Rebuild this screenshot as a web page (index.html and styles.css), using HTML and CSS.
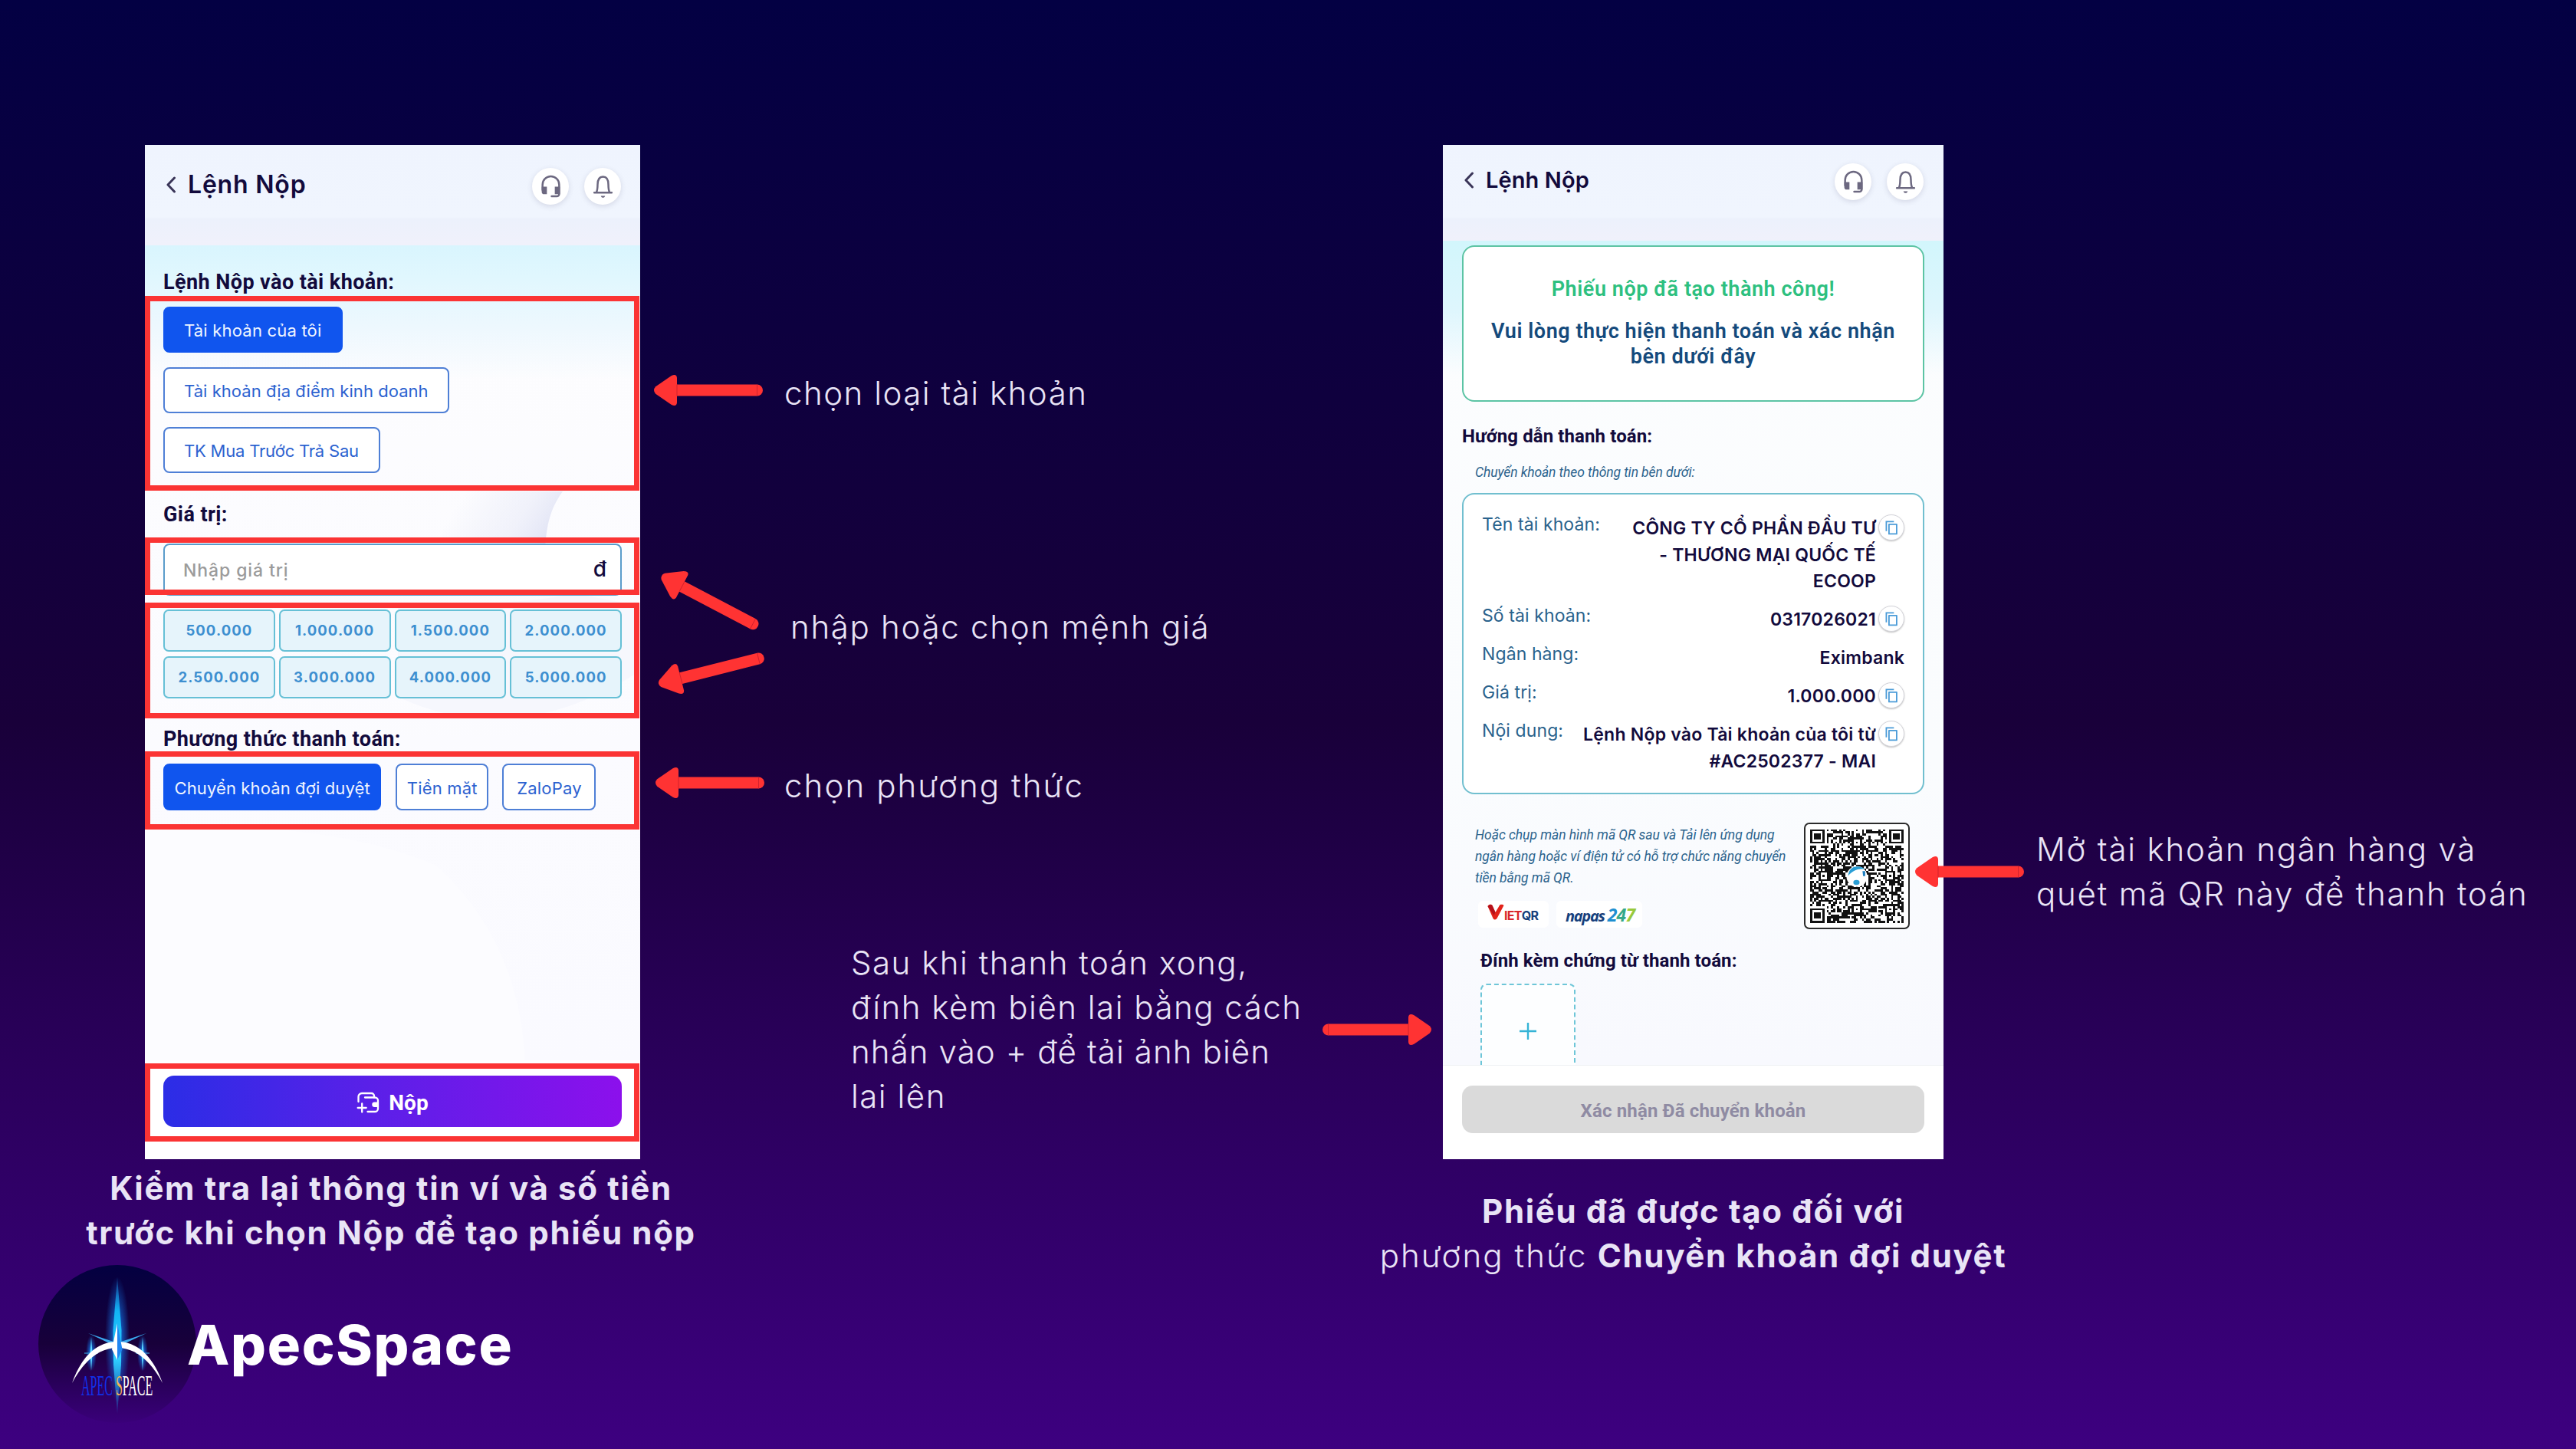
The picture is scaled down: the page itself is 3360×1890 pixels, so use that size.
FILE: index.html
```html
<!DOCTYPE html>
<html lang="vi">
<head>
<meta charset="utf-8">
<title>ApecSpace – Lệnh Nộp</title>
<link rel="stylesheet" href="styles.css">
</head>
<body>
<svg class="defs" aria-hidden="true">
  <symbol id="i-back" viewBox="0 0 14 22"><path d="M11.5 2 3 11l8.5 9" fill="none" stroke="#3a3558" stroke-width="3" stroke-linecap="round" stroke-linejoin="round"/></symbol>
  <symbol id="i-headset" viewBox="0 0 26 30"><path d="M2.5 19v-6.500a10.500 10.500 0 0 1 21 0V24a3 3 0 0 1-3 3.200H14" fill="none" stroke="#6c6880" stroke-width="2.400" stroke-linecap="round"/><path d="M1.500 15h6.500v9.500H4.500a3 3 0 0 1-3-3zM18 15h6.500v9.500H18z" fill="#6c6880"/></symbol>
  <symbol id="i-bell" viewBox="0 0 26 30"><path d="M2 22.500h22M4.500 22.500c1.500-3 1.700-6 1.700-10C6.200 6 8.800 2.500 13 2.500s6.800 3.500 6.800 10c0 4 .2 7 1.700 10" fill="none" stroke="#6c6880" stroke-width="2.400" stroke-linecap="round" stroke-linejoin="round"/><path d="M10.300 26.500h5.400c-.4 1.600-1.400 2.400-2.700 2.400s-2.300-.8-2.700-2.400z" fill="#6c6880"/></symbol>
  <symbol id="i-copy" viewBox="0 0 18 20"><path d="M1.500 14.500v-13H12" fill="none" stroke="#4a9bd8" stroke-width="1.900"/><path d="M5.200 5.200h10.600v13.200H5.200z" fill="none" stroke="#4a9bd8" stroke-width="1.900" stroke-linejoin="round"/></symbol>
  <symbol id="i-deposit" viewBox="0 0 30 28"><g fill="none" stroke="#fff" stroke-width="2.300" stroke-linecap="round" stroke-linejoin="round"><path d="M2.500 13V6.500a4.500 4.500 0 0 1 4.500-4.500h12.500a3.500 3.500 0 0 1 3.500 3.500V7.500"/><path d="M11 7.500h13a4 4 0 0 1 4 4V22a4 4 0 0 1-4 4h-9.500"/><path d="M7.200 15.500v11M1.700 21h11"/></g><path d="M28 13.500h-4.500a3 3 0 0 0 0 6.500H28z" fill="#fff"/></symbol>
  <symbol id="a-left" viewBox="0 0 142 50"><path d="M28 17.500h106.500a7.500 7.500 0 0 1 0 15H28z"/><path d="M2.200 20.300 22.500 6.300Q29.500 2.800 30 9V41q-.5 6.200-7.500 2.700L2.200 29.700Q-2.200 25 2.200 20.300z"/><path d="M30 17.500v15M134.500 17.500v15" fill="none" stroke="#c81f2c" stroke-width=".8"/></symbol>
</svg>

<main class="slide">
  <section class="panel">
    <div class="phone phone-order">
      <svg class="swoosh" viewBox="0 0 646 1323" aria-hidden="true">
        <defs>
          <linearGradient id="fold" gradientUnits="userSpaceOnUse" x1="420" y1="450" x2="528" y2="520"><stop offset="0" stop-color="#e6e9f7" stop-opacity="0"/><stop offset=".6" stop-color="#e9ebf8" stop-opacity=".6"/><stop offset="1" stop-color="#dfe2f4"/></linearGradient>
        </defs>
        <path d="M545 452C528 475 522 500 522 540L380 540 400 452z" fill="url(#fold)"/>
        <path d="M330 600Q500 600 560 585L640 600 640 690Q480 790 330 720z" fill="#f6f7fd"/>
        <path d="M0 890Q240 880 380 940 490 1040 496 1200H0z" fill="#fcfcff"/>
      </svg>
      <header class="topbar">
        <svg class="back"><use href="#i-back"/></svg>
        <h1 class="title">Lệnh Nộp</h1>
        <span class="round"><svg><use href="#i-headset"/></svg></span>
        <span class="round"><svg><use href="#i-bell"/></svg></span>
      </header>
      <div class="content">
        <h2 class="heading">Lệnh Nộp vào tài khoản:</h2>
        <div class="accounts">
          <button class="option active">Tài khoản của tôi</button>
          <button class="option">Tài khoản địa điểm kinh doanh</button>
          <button class="option later">TK Mua Trước Trả Sau</button>
        </div>
        <h2 class="heading value-heading">Giá trị:</h2>
        <div class="field"><span class="placeholder">Nhập giá trị</span><span class="unit">đ</span></div>
        <div class="amounts">
          <button>500.000</button><button>1.000.000</button><button>1.500.000</button><button>2.000.000</button>
          <button>2.500.000</button><button>3.000.000</button><button>4.000.000</button><button>5.000.000</button>
        </div>
        <h2 class="heading method-heading">Phương thức thanh toán:</h2>
        <div class="methods">
          <button class="option active">Chuyển khoản đợi duyệt</button>
          <button class="option">Tiền mặt</button>
          <button class="option">ZaloPay</button>
        </div>
      </div>
      <footer class="actions">
        <button class="submit"><svg><use href="#i-deposit"/></svg>Nộp</button>
      </footer>
      <i class="mark mark-accounts"></i>
      <i class="mark mark-field"></i>
      <i class="mark mark-amounts"></i>
      <i class="mark mark-methods"></i>
      <i class="mark mark-submit"></i>
    </div>
    <p class="caption"><b>Kiểm tra lại thông tin ví và số tiền<br>trước khi chọn Nộp để tạo phiếu nộp</b></p>
    <div class="brand">
      <svg class="emblem" viewBox="0 0 206 206">
        <defs>
          <linearGradient id="sky" x1="0" y1="0" x2="0" y2="1"><stop offset="0" stop-color="#030041"/><stop offset=".5" stop-color="#18003a"/><stop offset="1" stop-color="#3a007a"/></linearGradient>
          <linearGradient id="beam" x1="0" y1="0" x2="0" y2="1"><stop offset="0" stop-color="#1a7fd8" stop-opacity=".3"/><stop offset=".25" stop-color="#12b4f5"/><stop offset=".6" stop-color="#2fd0ff"/><stop offset="1" stop-color="#1a7fd8" stop-opacity=".2"/></linearGradient>
          <radialGradient id="halo"><stop offset="0" stop-color="#1597ff"/><stop offset=".5" stop-color="#1173e6" stop-opacity=".55"/><stop offset="1" stop-color="#1173e6" stop-opacity="0"/></radialGradient>
        </defs>
        <circle cx="103" cy="103" r="103" fill="url(#sky)"/>
        <ellipse cx="103" cy="97" rx="16" ry="82" fill="url(#halo)"/>
        <ellipse cx="69" cy="115" rx="7" ry="24" fill="url(#halo)"/>
        <ellipse cx="136" cy="115" rx="7" ry="24" fill="url(#halo)"/>
        <path d="M103 16 108.500 85 108 130 103 194 98 130 97.500 85z" fill="url(#beam)"/>
        <path d="M69 94 70.500 115 69 138 67.500 115zM136 94 137.500 115 136 138 134.500 115z" fill="#5fd6ff"/>
        <path d="M60 115h18M127 115h18" stroke="#39b7f5" stroke-width="1"/>
        <path d="M65 89 101 101 99 105zM141 89 105 101 107 105z" fill="#3aa8ee"/>
        <path d="M44 154C56 120 76 100 103 100s47 20 59 54C146 124 126 108 103 108S60 124 44 154z" fill="#fff"/>
        <path d="M103 76 96 110 103 124z" fill="#fff"/>
        <path d="M103 76 109.500 110 103 124z" fill="#1f86f2"/>
        <text class="emblem-text" transform="translate(56 170) scale(.42 1)"><tspan fill="#1030e8">APEC</tspan><tspan dx="10" fill="#f5b553">S</tspan><tspan fill="#fff">PACE</tspan></text>
      </svg>
      <strong class="brand-name">ApecSpace</strong>
    </div>
  </section>

  <section class="notes">
    <div class="note note-account"><svg class="arrow"><use href="#a-left"/></svg><p>chọn loại tài khoản</p></div>
    <div class="note note-amount">
      <svg class="arrow-pair" viewBox="0 0 150 180"><use href="#a-left" width="142" height="50" transform="translate(10 21) rotate(27.800) translate(0 -25)"/><use href="#a-left" width="142" height="50" transform="translate(6 162) rotate(-14.200) translate(0 -25)"/></svg>
      <p>nhập hoặc chọn mệnh giá</p>
    </div>
    <div class="note note-method"><svg class="arrow"><use href="#a-left"/></svg><p>chọn phương thức</p></div>
    <div class="note note-receipt"><p>Sau khi thanh toán xong,<br>đính kèm biên lai bằng cách<br><span>nhấn vào + để tải ảnh biên</span><br>lai lên</p><svg class="arrow flipped"><use href="#a-left"/></svg></div>
  </section>

  <section class="panel">
    <div class="phone phone-result">
      <header class="topbar">
        <svg class="back"><use href="#i-back"/></svg>
        <h1 class="title">Lệnh Nộp</h1>
        <span class="round"><svg><use href="#i-headset"/></svg></span>
        <span class="round"><svg><use href="#i-bell"/></svg></span>
      </header>
      <div class="content">
        <div class="success">
          <p class="success-title">Phiếu nộp đã tạo thành công!</p>
          <p class="success-text">Vui lòng thực hiện thanh toán và xác nhận<br>bên dưới đây</p>
        </div>
        <h2 class="heading">Hướng dẫn thanh toán:</h2>
        <p class="hint">Chuyển khoản theo thông tin bên dưới:</p>
        <dl class="transfer">
          <div><dt>Tên tài khoản:</dt><dd>CÔNG TY CỔ PHẦN ĐẦU TƯ<br>- THƯƠNG MẠI QUỐC TẾ<br>ECOOP</dd><span class="copy"><svg><use href="#i-copy"/></svg></span></div>
          <div><dt>Số tài khoản:</dt><dd>0317026021</dd><span class="copy"><svg><use href="#i-copy"/></svg></span></div>
          <div><dt>Ngân hàng:</dt><dd>Eximbank</dd></div>
          <div><dt>Giá trị:</dt><dd>1.000.000</dd><span class="copy"><svg><use href="#i-copy"/></svg></span></div>
          <div><dt>Nội dung:</dt><dd>Lệnh Nộp vào Tài khoản của tôi từ<br>#AC2502377 - MAI</dd><span class="copy"><svg><use href="#i-copy"/></svg></span></div>
        </dl>
        <div class="qr-row">
          <div class="qr-info">
            <p class="hint">Hoặc chụp màn hình mã QR sau và Tải lên ứng dụng<br>ngân hàng hoặc ví điện tử có hỗ trợ chức năng chuyển<br>tiền bằng mã QR.</p>
            <div class="networks">
              <span class="vietqr"><svg viewBox="0 0 21 21"><path d="M0 3Q3-1 6 2l4 9L16 1q4-1 5 1L12 19q-3 3-5 0z" fill="#e2231a"/><path d="M0 3Q3-1 6 2l4 9-2 4z" fill="#b5121b"/></svg><em>IET</em>QR</span>
              <span class="napas">napas <em>2</em><em>4</em><em>7</em></span>
            </div>
          </div>
          <div class="qr-frame"><svg id="qr" viewBox="0 0 45 45" shape-rendering="crispEdges"></svg></div>
        </div>
        <h2 class="heading attach-heading">Đính kèm chứng từ thanh toán:</h2>
        <div class="upload"><svg viewBox="0 0 22 22"><path d="M11 0v22M0 11h22" stroke="#35b3d6" stroke-width="2.400"/></svg></div>
      </div>
      <footer class="actions"><button class="submit">Xác nhận Đã chuyển khoản</button></footer>
    </div>
    <p class="caption"><b>Phiếu đã được tạo đối với</b><br><span>phương thức</span> <b>Chuyển khoản đợi duyệt</b></p>
  </section>

  <section class="notes notes-qr">
    <div class="note note-qr"><svg class="arrow"><use href="#a-left"/></svg><p>Mở tài khoản ngân hàng và<br>quét mã QR này để thanh toán</p></div>
  </section>
</main>
<script src="qr.js"></script>
</body>
</html>
```
FILE: styles.css
```css
* { box-sizing: border-box; margin: 0; padding: 0; }

body {
  width: 3360px;
  height: 1890px;
  overflow: hidden;
  font-family: "Inter", "Liberation Sans", sans-serif;
  background: linear-gradient(180deg, #030043 0%, #19003a 50%, #3d0080 100%);
}

.defs { display: none; }
button { font: inherit; border: 0; background: none; }
svg { display: block; flex: none; }

.slide {
  display: grid;
  grid-template-columns: 853px 929px 853px 1fr;
  height: 1890px;
}
.panel { padding-top: 189px; }

/* phones */
.phone {
  position: relative;
  display: flex;
  flex-direction: column;
  height: 1323px;
  overflow: hidden;
  color: #120a3c;
}
.phone-order { width: 646px; margin-left: 189px; background: linear-gradient(180deg, #fdfdfe 0, #fafaff 1200px); }
.phone-result {
  width: 653px;
  margin-left: 100px;
  background: linear-gradient(180deg, #fcfdfe 0, #fafcfe 800px, #f8f9fe 1200px);
}
.swoosh { position: absolute; left: 0; top: 0; width: 646px; height: 1323px; }
.topbar {
  position: relative;
  display: flex;
  align-items: flex-start;
  height: 131px;
  padding: 30px 25px 0 27px;
  background: linear-gradient(180deg, #eff4fe 0, #f0f5fe 94px, #ecf1fc 96px, #f0f1fb 100%);
}
.phone-result .topbar { height: 125px; padding: 24px 26px 0 27px; }
.back { width: 14px; height: 22px; margin: 11px 15px 0 0; }
.title {
  margin-right: auto;
  font-size: 32px;
  font-weight: 600;
  line-height: 44px;
  letter-spacing: .8px;
}
.phone-result .title { font-size: 29px; line-height: 43px; letter-spacing: .1px; }
.round {
  display: grid;
  place-items: center;
  width: 48px;
  height: 48px;
  margin-left: 20px;
  border-radius: 50%;
  background: #fff;
  box-shadow: 0 2px 7px rgba(60, 60, 100, .16);
}
.round svg { width: 27px; height: 31px; }

.content { position: relative; flex: 1; min-height: 0; overflow: hidden; padding: 32px 24px 0; background: linear-gradient(180deg, #d9f5fe 0, #e0f7fe 40px, #eef8fe 110px, rgba(252, 253, 254, 0) 175px); }
.phone-result .content { padding: 6px 25px 0; background: linear-gradient(180deg, #d2f6fc 0, #def6fd 90px, rgba(252, 253, 254, 0) 175px); }
.heading {
  font-family: "Roboto", sans-serif;
  font-size: 27px;
  font-weight: 700;
  line-height: 32px;
  letter-spacing: .42px;
}
.accounts { display: flex; flex-direction: column; align-items: flex-start; gap: 18.5px; margin-top: 16px; }
.option {
  height: 60px;
  padding: 2px 25px 0;
  border: 2px solid #4e7fd6;
  border-radius: 8px;
  background: #fff;
  color: #2c62d0;
  font-size: 22px;
  line-height: 55px;
  letter-spacing: .05px;
  white-space: nowrap;
}
.option.active { border-color: #1055ee; background: #1055ee; color: #eef4ff; letter-spacing: .2px; }
.option.later { letter-spacing: -.2px; padding-right: 26px; }
.value-heading { margin-top: 38px; }
.field {
  display: flex;
  justify-content: space-between;
  height: 68px;
  margin-top: 22px;
  padding: 0 18px 0 24px;
  border: 2px solid #5a9ccb;
  border-radius: 8px;
  background: #fff;
  line-height: 67px;
}
.placeholder { font-size: 23px; font-weight: 500; letter-spacing: .9px; color: #9b9b9b; }
.unit { font-size: 28px; font-weight: 500; line-height: 63px; }
.amounts { display: grid; grid-template-columns: repeat(4, 1fr); gap: 6px 5px; margin-top: 18px; }
.amounts button {
  height: 55px;
  padding-bottom: 1px;
  border: 2px solid #66c0d6;
  border-radius: 7px;
  background: #e6f4fb;
  color: #3d8fd0;
  font-size: 18.500px;
  font-weight: 700;
  line-height: 49px;
  letter-spacing: 1.100px;
}
.method-heading { margin-top: 37px; }
.methods { display: flex; gap: 18.5px; margin-top: 16px; }
.methods .option { height: 61px; padding: 3px 12.500px 0 12.500px; letter-spacing: .12px; }
.methods .option + .option { padding: 3px 12px 0 13px; letter-spacing: .2px; }
.methods .option + .option + .option { padding: 3px 16px 0 17px; }

.actions { position: relative; height: 129px; padding: 20px 24px 0; background: #fff; }
.submit {
  display: flex;
  align-items: center;
  justify-content: center;
  gap: 12px;
  width: 598px;
  height: 67px;
  padding-top: 3px;
  border-radius: 14px;
  background: linear-gradient(90deg, #2b2de6 0, #5a20e8 45%, #8c10ec 100%);
  color: #fff;
  font-family: "Roboto", sans-serif;
  font-size: 28px;
  font-weight: 700;
}
.submit svg { width: 30px; height: 28px; }
.phone-result .actions { height: 123px; padding: 26px 25px 0; border-top: 1px solid #eef1f4; }
.phone-result .submit { width: 603px; height: 62px; background: #dadada; color: #8f8ba3; font-size: 24px; letter-spacing: .15px; }

/* red frames over the form */
.mark { position: absolute; left: 0; width: 645px; border: 7px solid #fb3434; }
.mark-accounts { top: 197px; height: 254px; }
.mark-field { top: 512px; height: 75px; }
.mark-amounts { top: 597px; height: 151px; }
.mark-methods { top: 791px; height: 102px; }
.mark-submit { top: 1198px; height: 102px; }

/* result screen */
.success {
  height: 204px;
  padding-top: 39px;
  border: 2px solid #5cc4a4;
  border-radius: 16px;
  background: #fff;
  font-family: "Roboto", sans-serif;
  font-size: 27px;
  font-weight: 600;
  line-height: 33px;
  letter-spacing: .55px;
  text-align: center;
}
.success-title { color: #2dc07f; }
.success-text { margin-top: 22px; color: #144a7c; }
.phone-result .heading { margin-top: 31px; font-size: 24px; line-height: 28px; letter-spacing: .1px; }
.hint {
  margin: 22px 0 0 17px;
  font-family: "Roboto", sans-serif;
  font-size: 17.500px;
  font-style: italic;
  line-height: 22px;
  letter-spacing: -.1px;
  color: #2b638d;
  white-space: nowrap;
}
.transfer {
  display: flex;
  flex-direction: column;
  gap: 15.500px;
  height: 393px;
  margin-top: 16px;
  padding: 27px 24px 0 24px;
  border: 2px solid #71bfcf;
  border-radius: 16px;
  background: #fff;
  font-size: 23px;
}
.transfer div { display: flex; align-items: flex-start; }
.transfer dt { margin-right: auto; line-height: 24.500px; letter-spacing: .1px; color: #2a628c; white-space: nowrap; }
.transfer dd { font-weight: 600; line-height: 34.500px; letter-spacing: .22px; text-align: right; white-space: nowrap; }
.copy {
  display: grid;
  place-items: center;
  width: 34px;
  height: 34px;
  margin: -1px 0 0 3px;
  border: 1px solid #d4d4da;
  border-radius: 50%;
  background: #fff;
  box-shadow: 0 1px 2px rgba(0, 0, 0, .25);
}
.copy svg { width: 17px; height: 19px; }
.qr-row { display: flex; justify-content: space-between; margin: 37px 19px 0 0; }
.qr-info .hint { margin-top: 2px; line-height: 28px; letter-spacing: -.05px; }
.networks { display: flex; gap: 10px; margin: 16px 0 0 21px; }
.networks span { display: flex; align-items: baseline; height: 35px; border-radius: 6px; background: #fff; line-height: 35px; font-weight: 700; color: #16407c; }
.networks em { font-style: normal; }
.vietqr { width: 92px; padding: 2px 0 0 12px; font-size: 16px; letter-spacing: -.7px; }
.vietqr svg { width: 22px; height: 21px; }
.vietqr em { color: #d9262b; }
.networks .napas { padding: 1px 10px 0 12px; font-family: "Open Sans", sans-serif; font-size: 20px; font-weight: 700; font-style: italic; letter-spacing: -1.300px; white-space: pre; }
.napas em { font-style: italic; font-size: 23px; letter-spacing: -.8px; }
.napas em:nth-of-type(1) { color: #1f8fd0; }
.napas em:nth-of-type(2) { color: #35a889; }
.napas em:nth-of-type(3) { color: #98c93c; }
.qr-frame { width: 138px; height: 139px; padding: 6px; border: 2px solid #2b2b2b; border-radius: 7px; background: #fff; }
.qr-frame svg { width: 122px; height: 123px; }
.phone-result .attach-heading { margin: 27px 0 0 24px; }
.upload {
  display: grid;
  place-items: center;
  width: 124px;
  height: 124px;
  margin: 16px 0 0 24px;
  border: 2px dashed #6ec6d8;
  border-radius: 8px;
  background: #fdfeff;
}
.upload svg { width: 22px; height: 22px; }

/* captions and notes */
.caption, .note p {
  font-size: 42px;
  font-weight: 300;
  line-height: 58px;
  letter-spacing: 1.500px;
  color: #e9e4f6;
  white-space: nowrap;
}
.caption { width: 1020px; margin-top: 9px; text-align: center; }
.caption b { font-weight: 700; letter-spacing: 1.650px; }
.phone-result + .caption { width: 873px; margin: 39px 0 0 -10px; }
.caption span { letter-spacing: 2.100px; }

.note { display: flex; align-items: flex-start; }
.arrow { width: 142px; height: 50px; fill: #ff3333; }
.arrow-pair { width: 150px; height: 180px; fill: #ff3333; overflow: visible; }
.flipped { transform: scaleX(-1); }
.note-account { margin-top: 484px; gap: 28px; }
.note-amount { margin-top: 188px; gap: 28px; }
.note-amount p { margin-top: 59px; letter-spacing: 1.700px; }
.note-method { margin: 86px 0 0 2px; gap: 26px; }
.note-method p { letter-spacing: 2.100px; }
.note-receipt { align-items: center; justify-content: space-between; width: 757px; margin: 173px 0 0 257px; }
.note-receipt span { letter-spacing: 1.100px; }
.notes-qr { position: relative; margin-left: -137px; }
.note-qr { align-items: center; margin-top: 1079px; gap: 16px; }
.note-qr p { letter-spacing: 1.800px; }

/* brand */
.brand { display: flex; align-items: flex-start; margin: 13px 0 0 50px; }
.emblem { width: 206px; height: 206px; }
.emblem-text { font: 38px "Liberation Serif", serif; }
.brand-name { margin: 64px 0 0 -12px; color: #fff; font-size: 72px; font-weight: 800; line-height: 80px; letter-spacing: 1.700px; }
```
FILE: qr.js
```js
// Draws a 45x45 module code (version 7 layout) into #qr.
const SIZE = 45;
const grid = Array.from({ length: SIZE }, () => Array(SIZE).fill(null));

function square(cx, cy, radius, dark) {
  for (let y = cy - radius; y <= cy + radius; y++) {
    for (let x = cx - radius; x <= cx + radius; x++) {
      if (x < 0 || y < 0 || x >= SIZE || y >= SIZE) continue;
      grid[y][x] = dark(Math.max(Math.abs(x - cx), Math.abs(y - cy)));
    }
  }
}

for (let i = 8; i < SIZE - 8; i++) {
  grid[6][i] = grid[i][6] = i % 2 === 0;
}
for (const [x, y] of [[22, 6], [6, 22], [38, 22], [22, 38], [38, 38]]) {
  square(x, y, 2, (d) => d !== 1);
}
for (const [x, y] of [[3, 3], [41, 3], [3, 41]]) {
  square(x, y, 4, (d) => d !== 2 && d !== 4);
}

let seed = 20250237;
const next = () => (seed = (seed * 1103515245 + 12345) % 2147483648) / 2147483648;
let path = "";
grid.forEach((row, y) => row.forEach((cell, x) => {
  const dark = cell === null ? next() < 0.52 : cell;
  if (dark) path += `M${x} ${y}h1v1h-1z`;
}));

document.getElementById("qr").innerHTML = `
  <path d="${path}" fill="#111"/>
  <g shape-rendering="auto">
    <circle cx="22.500" cy="22.800" r="5" fill="#fff"/>
    <path d="M18.300 22.500c.2-3 2-4.600 4.700-4.500 1.500 0 2.600.6 3.300 1.400-3-.6-5.600.3-8 3.100z" fill="#2a9fd6"/>
    <path d="M25.200 20.200h1.300v2.400h-1z" fill="#1f7fc0"/>
    <ellipse cx="22.300" cy="25.600" rx="1.500" ry="1.200" fill="#2a9fd6"/>
  </g>`;
```
